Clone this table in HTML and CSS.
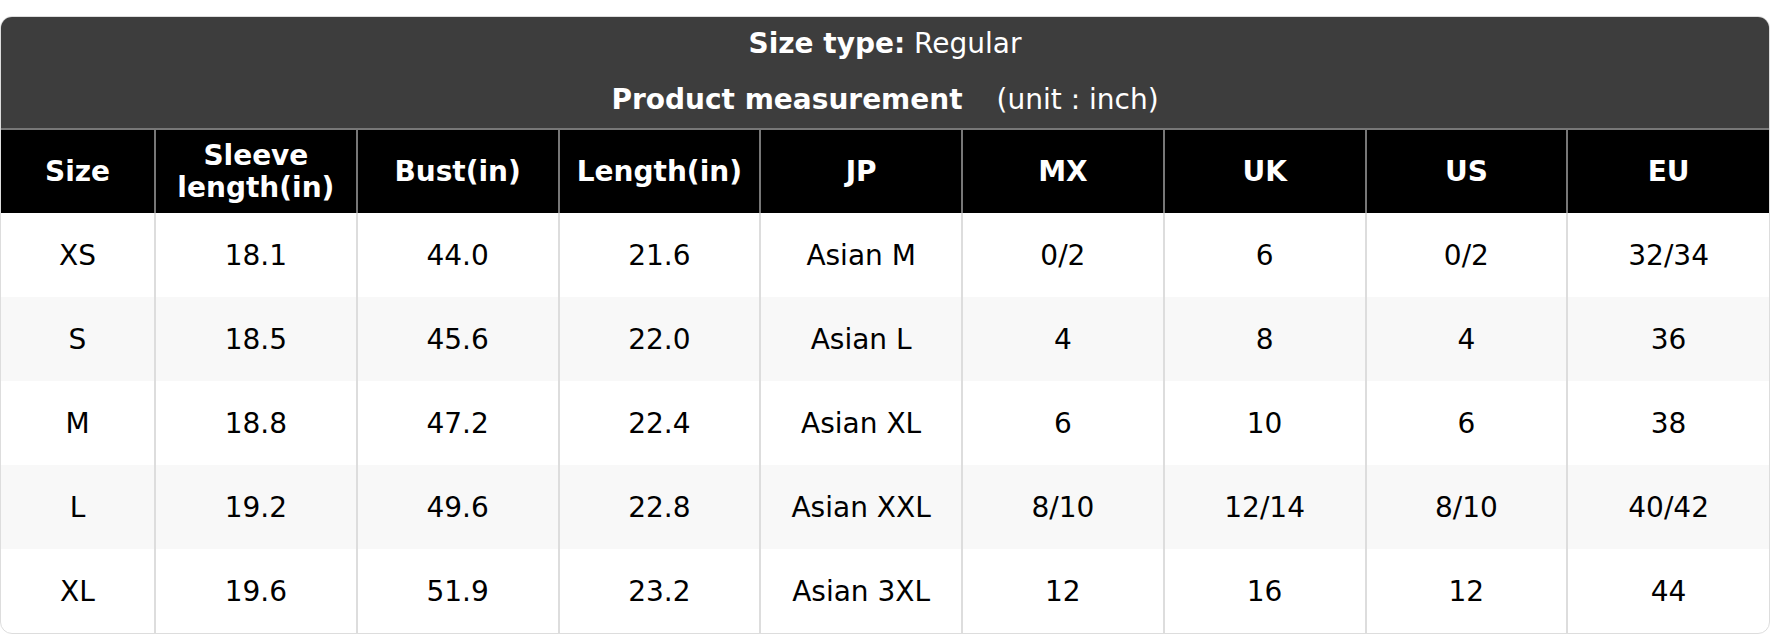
FILE: index.html
```html
<!DOCTYPE html>
<html>
<head>
<meta charset="utf-8">
<link rel="stylesheet" href="styles.css">
</head>
<body>
<div class="card">
  <div class="banner">
    <div class="banner-line"><b>Size type:</b> Regular</div>
    <div class="banner-line"><b>Product measurement</b><span class="unit">(unit : inch)</span></div>
  </div>
  <table class="chart">
    <colgroup>
      <col class="c-first"><col><col><col><col><col><col><col><col>
    </colgroup>
    <thead>
      <tr>
        <th>Size</th><th>Sleeve<br>length(in)</th><th>Bust(in)</th><th>Length(in)</th><th>JP</th><th>MX</th><th>UK</th><th>US</th><th>EU</th>
      </tr>
    </thead>
    <tbody>
      <tr><td>XS</td><td>18.1</td><td>44.0</td><td>21.6</td><td>Asian M</td><td>0/2</td><td>6</td><td>0/2</td><td>32/34</td></tr>
      <tr><td>S</td><td>18.5</td><td>45.6</td><td>22.0</td><td>Asian L</td><td>4</td><td>8</td><td>4</td><td>36</td></tr>
      <tr><td>M</td><td>18.8</td><td>47.2</td><td>22.4</td><td>Asian XL</td><td>6</td><td>10</td><td>6</td><td>38</td></tr>
      <tr><td>L</td><td>19.2</td><td>49.6</td><td>22.8</td><td>Asian XXL</td><td>8/10</td><td>12/14</td><td>8/10</td><td>40/42</td></tr>
      <tr><td>XL</td><td>19.6</td><td>51.9</td><td>23.2</td><td>Asian 3XL</td><td>12</td><td>16</td><td>12</td><td>44</td></tr>
    </tbody>
  </table>
</div>
</body>
</html>
```

FILE: styles.css
```css
html, body {
  margin: 0;
  padding: 0;
  background: #ffffff;
}
body {
  padding-top: 16px;
  font-family: "DejaVu Sans", sans-serif;
}
.card {
  width: 1770px;
  box-sizing: border-box;
  border: 1px solid #dddddd;
  border-radius: 12px;
  overflow: hidden;
  background: #ffffff;
}
.banner {
  background: #3d3d3d;
  color: #ffffff;
  height: 111px;
  display: flex;
  flex-direction: column;
  align-items: center;
  justify-content: center;
  gap: 22px;
  font-size: 28px;
  line-height: 34px;
  padding-bottom: 2px;
  box-sizing: border-box;
}
.banner-line b {
  font-weight: bold;
}
.unit {
  margin-left: 34px;
}
.chart {
  width: 100%;
  border-collapse: collapse;
  table-layout: fixed;
  font-size: 28px;
}
.c-first {
  width: 154px;
}
.chart th {
  background: #000000;
  color: #ffffff;
  font-weight: bold;
  height: 83px;
  line-height: 32px;
  padding: 0;
  border-top: 2px solid #777777;
  border-left: 2px solid #777777;
  text-align: center;
  vertical-align: middle;
}
.chart th:first-child,
.chart td:first-child {
  border-left: none;
}
.chart td {
  height: 84px;
  padding: 0;
  text-align: center;
  vertical-align: middle;
  color: #000000;
  border-left: 2px solid #dddddd;
}
.chart tbody tr:nth-child(even) td {
  background: #f8f8f8;
}
```
